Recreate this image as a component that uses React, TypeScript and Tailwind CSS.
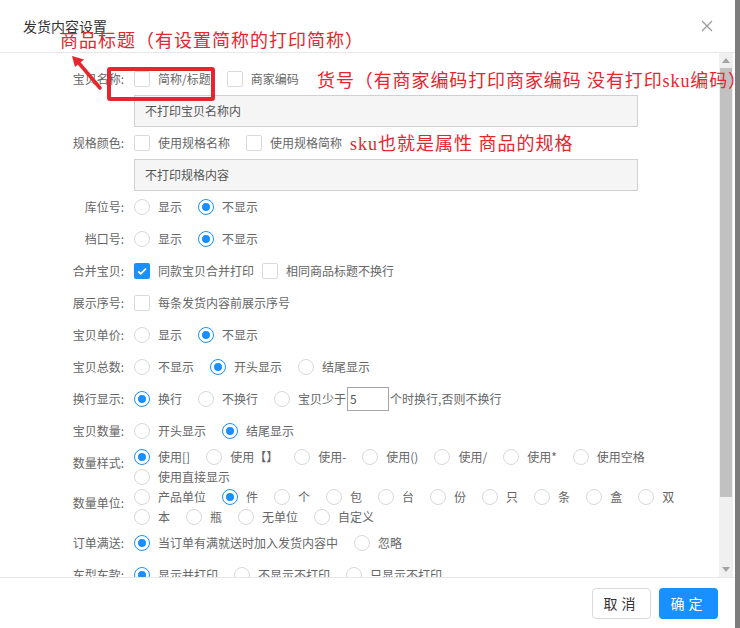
import type { ReactNode } from 'react';

function Radio({ checked }: { checked?: boolean }) {
  return (
    <span
      className={`flex h-4 w-4 shrink-0 items-center justify-center rounded-full border bg-white ${
        checked ? 'border-[#1890ff]' : 'border-[#d9d9d9]'
      }`}
    >
      {checked && <span className="h-2 w-2 rounded-full bg-[#1890ff]" />}
    </span>
  );
}

function Checkbox({ checked }: { checked?: boolean }) {
  if (checked) {
    return (
      <span className="flex h-4 w-4 shrink-0 items-center justify-center rounded-[2px] bg-[#1890ff]">
        <svg viewBox="0 0 16 16" className="h-4 w-4">
          <path d="M4.2 8.3l2.6 2.5L11.9 5.6" fill="none" stroke="#fff" strokeWidth="1.8" />
        </svg>
      </span>
    );
  }
  return <span className="h-4 w-4 shrink-0 rounded-[2px] border border-[#d9d9d9] bg-white" />;
}

function Opt({
  type,
  checked,
  children,
  tight,
}: {
  type: 'radio' | 'check';
  checked?: boolean;
  children: ReactNode;
  tight?: boolean;
}) {
  return (
    <label className={`flex h-5 items-center gap-2 ${tight ? 'mr-2' : 'mr-4'}`}>
      {type === 'radio' ? <Radio checked={checked} /> : <Checkbox checked={checked} />}
      <span className="whitespace-nowrap">{children}</span>
    </label>
  );
}

function Row({ label, children, wrap }: { label: string; children: ReactNode; wrap?: boolean }) {
  return (
    <div className={`flex ${wrap ? 'items-start' : 'h-8 items-center'}`}>
      <div className={`w-[134px] shrink-0 pr-[10px] text-right leading-5 ${wrap ? 'pt-[6px]' : ''}`}>
        {label}:
      </div>
      <div className="flex flex-1 flex-wrap items-center pr-4">{children}</div>
    </div>
  );
}

function ReadonlyInput({ text }: { text: string }) {
  return (
    <div className="ml-[134px] flex h-8 w-[504px] items-center border border-[#d0d0d0] bg-[#f5f5f5] pl-[10px] text-[#555]">
      {text}
    </div>
  );
}

const styles = ['使用[]', '使用【】', '使用-', '使用()', '使用/', '使用*', '使用空格', '使用直接显示'];
const units = ['产品单位', '件', '个', '包', '台', '份', '只', '条', '盒', '双', '本', '瓶', '无单位', '自定义'];

export default function App() {
  return (
    <div
      className="relative flex h-[628px] w-[740px] overflow-hidden text-[12px] text-[#666]"
      style={{ fontFamily: '"Noto Sans CJK SC", "Noto Sans", sans-serif' }}
    >
      {/* Dialog */}
      <div className="flex w-[735px] shrink-0 flex-col bg-white">
        {/* Header */}
        <div className="flex h-[53px] shrink-0 items-center justify-between border-b border-[#e8e8e8] pl-[23px] pr-[22px]">
          <span className="text-[14px] text-[#333]">发货内容设置</span>
          <svg viewBox="0 0 12 12" className="h-3 w-3">
            <path d="M1 1l10 10M11 1L1 11" stroke="#999" strokeWidth="1.2" fill="none" />
          </svg>
        </div>

        {/* Body */}
        <div className="flex min-h-0 flex-1">
          <div className="flex-1 overflow-hidden pt-[10px]">
            <Row label="宝贝名称">
              <Opt type="check">简称/标题</Opt>
              <Opt type="check">商家编码</Opt>
            </Row>
            <ReadonlyInput text="不打印宝贝名称内" />
            <Row label="规格颜色">
              <Opt type="check">使用规格名称</Opt>
              <Opt type="check">使用规格简称</Opt>
            </Row>
            <ReadonlyInput text="不打印规格内容" />
            <Row label="库位号">
              <Opt type="radio">显示</Opt>
              <Opt type="radio" checked>不显示</Opt>
            </Row>
            <Row label="档口号">
              <Opt type="radio">显示</Opt>
              <Opt type="radio" checked>不显示</Opt>
            </Row>
            <Row label="合并宝贝">
              <Opt type="check" checked tight>同款宝贝合并打印</Opt>
              <Opt type="check">相同商品标题不换行</Opt>
            </Row>
            <Row label="展示序号">
              <Opt type="check">每条发货内容前展示序号</Opt>
            </Row>
            <Row label="宝贝单价">
              <Opt type="radio">显示</Opt>
              <Opt type="radio" checked>不显示</Opt>
            </Row>
            <Row label="宝贝总数">
              <Opt type="radio">不显示</Opt>
              <Opt type="radio" checked>开头显示</Opt>
              <Opt type="radio">结尾显示</Opt>
            </Row>
            <Row label="换行显示">
              <Opt type="radio" checked>换行</Opt>
              <Opt type="radio">不换行</Opt>
              <label className="flex h-5 items-center gap-2">
                <Radio />
                <span className="flex items-center whitespace-nowrap">
                  宝贝少于
                  <span className="mx-[1px] flex h-6 w-[42px] items-center border border-[#a6a6a6] pl-[2px] text-[#555]">
                    5
                  </span>
                  个时换行,否则不换行
                </span>
              </label>
            </Row>
            <Row label="宝贝数量">
              <Opt type="radio">开头显示</Opt>
              <Opt type="radio" checked>结尾显示</Opt>
            </Row>
            <Row label="数量样式" wrap>
              {styles.map((s, i) => (
                <Opt key={s} type="radio" checked={i === 0}>
                  {s}
                </Opt>
              ))}
            </Row>
            <Row label="数量单位" wrap>
              {units.map((u, i) => (
                <Opt key={u} type="radio" checked={i === 1}>
                  {u}
                </Opt>
              ))}
            </Row>
            <Row label="订单满送">
              <Opt type="radio" checked>当订单有满就送时加入发货内容中</Opt>
              <Opt type="radio">忽略</Opt>
            </Row>
            <Row label="车型车款">
              <Opt type="radio" checked>显示并打印</Opt>
              <Opt type="radio">不显示不打印</Opt>
              <Opt type="radio">只显示不打印</Opt>
            </Row>
          </div>

          {/* Scrollbar */}
          <div className="mr-[2px] flex w-[14px] shrink-0 flex-col bg-[#f0f0f0]">
            <div className="flex h-[15px] items-center justify-center">
              <svg viewBox="0 0 8 5" className="h-[5px] w-2">
                <path d="M0 5L4 0l4 5z" fill="#a3a3a3" />
              </svg>
            </div>
            <div className="mx-[1px] h-[429px] bg-[#c1c1c1]" />
            <div className="flex-1" />
            <div className="flex h-[15px] items-center justify-center">
              <svg viewBox="0 0 8 5" className="h-[5px] w-2">
                <path d="M0 0h8L4 5z" fill="#a3a3a3" />
              </svg>
            </div>
          </div>
        </div>

        {/* Footer */}
        <div className="flex h-[51px] shrink-0 items-center justify-end gap-2 border-t border-[#e8e8e8] pr-[17px]">
          <button className="h-[31px] w-[59px] rounded border border-[#d9d9d9] bg-white text-[14px] tracking-[4px] text-[#333]">
            取消
          </button>
          <button className="h-[31px] w-[59px] rounded bg-[#1890ff] text-[14px] tracking-[4px] text-white">
            确定
          </button>
        </div>
      </div>

      {/* Overlay behind dialog */}
      <div className="flex-1 bg-[#7c7c7c]" />

      {/* Red annotations */}
      <div
        className="pointer-events-none absolute left-[60px] top-[32px] whitespace-nowrap text-[18px] leading-[18px] tracking-[1px] text-[#e5262e]"
        style={{ fontFamily: '"Liberation Serif", "Noto Sans CJK SC", serif' }}
      >
        商品标题（有设置简称的打印简称）
      </div>
      <div
        className="pointer-events-none absolute left-[317px] top-[72px] whitespace-nowrap text-[18px] leading-[18px] tracking-[0.9px] text-[#e5262e]"
        style={{ fontFamily: '"Liberation Serif", "Noto Sans CJK SC", serif' }}
      >
        货号（有商家编码打印商家编码 没有打印sku编码）
      </div>
      <div
        className="pointer-events-none absolute left-[350px] top-[135px] whitespace-nowrap text-[18px] leading-[18px] tracking-[1px] text-[#e5262e]"
        style={{ fontFamily: '"Liberation Serif", "Noto Sans CJK SC", serif' }}
      >
        sku也就是属性 商品的规格
      </div>
      <div className="pointer-events-none absolute left-[107px] top-[67px] h-[34px] w-[108px] rounded-[3px] border-[4px] border-[#e5262e]" />
      <svg className="pointer-events-none absolute left-[60px] top-[48px] h-[50px] w-[50px]" viewBox="0 0 50 50">
        <path d="M40 40L18 14" stroke="#e5262e" strokeWidth="3.5" strokeLinecap="round" />
        <path d="M12 8l12 3.5-9 7.5z" fill="#e5262e" />
      </svg>
    </div>
  );
}
